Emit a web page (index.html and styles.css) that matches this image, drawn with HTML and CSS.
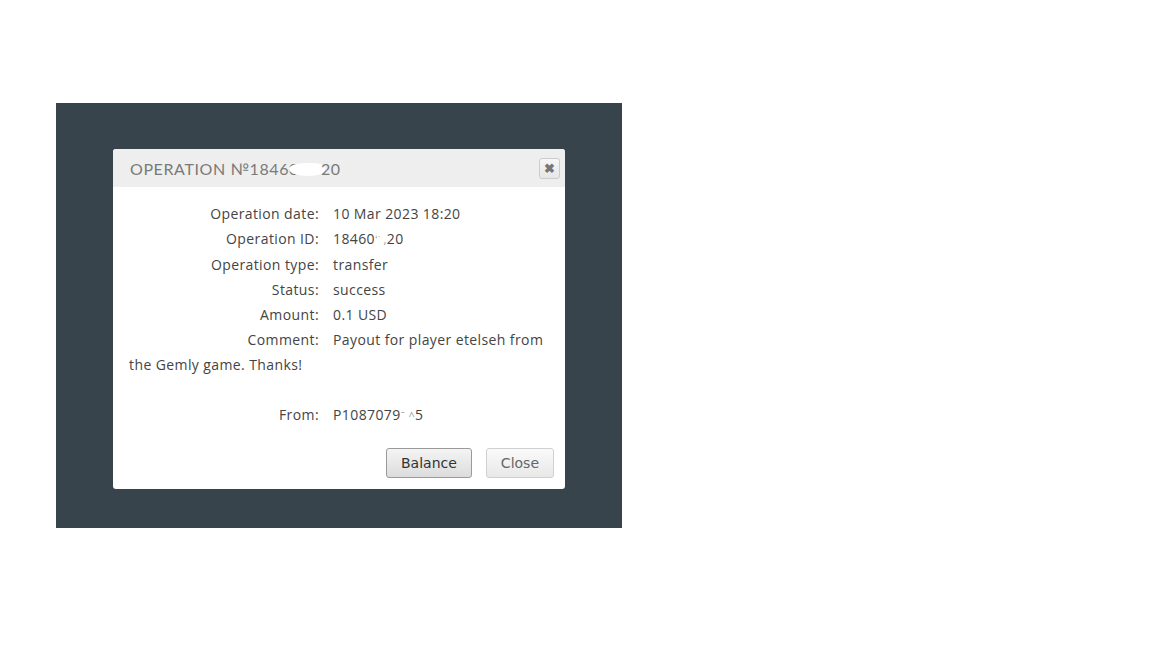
FILE: index.html
```html
<!DOCTYPE html>
<html lang="en">
<head>
    <meta charset="UTF-8">
    <title>Operation</title>
    <link rel="stylesheet" href="styles.css">
</head>
<body>

<div class="backdrop">
    <div class="modal">
        <div class="modal-header">
            <span class="modal-title">Operation №18460<span class="blot"></span>20</span>
            <button class="close-x" title="Close">&#10006;</button>
        </div>

        <div class="modal-body">
            <div class="row"><span class="label">Operation date:</span>10 Mar 2023 18:20</div>
            <div class="row"><span class="label">Operation ID:</span>18460<span class="masked">ʻ˙ ,</span>20</div>
            <div class="row"><span class="label">Operation type:</span>transfer</div>
            <div class="row"><span class="label">Status:</span>success</div>
            <div class="row"><span class="label">Amount:</span>0.1 USD</div>
            <div class="row"><span class="label">Comment:</span>Payout for player etelseh from the Gemly game. Thanks!</div>
            <div class="row row-empty"></div>
            <div class="row"><span class="label">From:</span>P1087079<span class="masked">ˉ ^</span>5</div>
        </div>

        <div class="modal-footer">
            <button class="btn btn-primary">Balance</button>
            <button class="btn">Close</button>
        </div>
    </div>
</div>

</body>
</html>
```

FILE: styles.css
```css
body {
    margin: 0;
    padding: 103px 0 0 56px;
    background: #ffffff;
    font-family: "Open Sans", Arial, sans-serif;
}

.backdrop {
    width: 566px;
    height: 425px;
    box-sizing: border-box;
    padding: 46px 57px;
    background: #37444b;
}

.modal {
    width: 452px;
    background: white;
    border-radius: 3px;
    overflow: hidden;
}

.modal-header {
    height: 38px;
    display: flex;
    align-items: center;
    justify-content: space-between;
    padding: 0 5px 0 17px;
    background: #eeeeee;
}

.modal-title {
    font-family: Lato, "Open Sans", sans-serif;
    font-size: 16px;
    letter-spacing: 0.6px;
    text-transform: uppercase;
    color: #7a7a7a;
}

.blot {
    display: inline-block;
    width: 36px;
    height: 13px;
    margin: 0 -4px 0 -10px;
    vertical-align: -1px;
    background: white;
    border-radius: 50% 40% 50% 60%;
}

.close-x {
    width: 21px;
    height: 21px;
    padding: 0;
    border: 1px solid #cccccc;
    border-radius: 3px;
    background: linear-gradient(#f7f7f7, #e6e6e6);
    color: #777777;
    font-size: 13px;
    font-weight: bold;
    line-height: 19px;
    cursor: pointer;
}

.modal-body {
    padding: 14px 16px 0 16px;
    font-size: 14px;
    letter-spacing: 0.4px;
    color: #444444;
}

.row {
    line-height: 25px;
}

.row-empty {
    height: 25px;
}

.label {
    float: left;
    width: 190px;
    margin-right: 14px;
    text-align: right;
}

.masked {
    color: #999999;
    font-size: 11px;
}

.modal-footer {
    display: flex;
    justify-content: flex-end;
    gap: 14px;
    padding: 20px 11px 11px 0;
}

.btn {
    height: 30px;
    padding: 0 14px;
    font-family: "DejaVu Sans", sans-serif;
    font-size: 14px;
    color: #666666;
    border: 1px solid #d0d0d0;
    border-radius: 3px;
    background: linear-gradient(#fafafa, #e8e8e8);
    cursor: pointer;
}

.btn-primary {
    color: #333333;
    border-color: #9a9a9a;
    background: linear-gradient(#f4f4f4, #dcdcdc);
}
```
